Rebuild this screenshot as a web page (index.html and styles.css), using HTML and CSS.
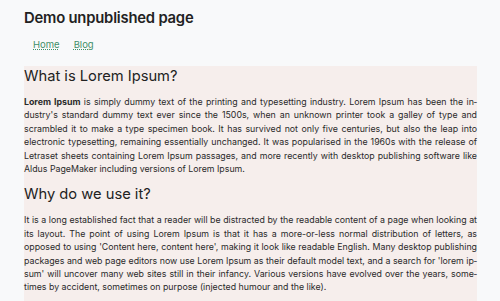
FILE: index.html
```html
<!doctype html>
<html lang="en">
<head>
	<title>Demo unpublished page</title>
	<link rel="stylesheet" href="styles.css">
</head>
<body>
	<div class="page">
		<h1>Demo unpublished page</h1>

		<ul class="nav">
			<li><a href="#">Home</a></li>
			<li><a href="#">Blog</a></li>
		</ul>

		<div class="content">
			<h2>What is Lorem Ipsum?</h2>
			<p><strong>Lorem Ipsum</strong> is simply dummy text of the printing and typesetting industry. Lorem Ipsum has been the in&shy;dustry's standard dummy text ever since the 1500s, when an unknown printer took a galley of type and scrambled it to make a type specimen book. It has survived not only five centuries, but also the leap into electronic typesetting, remaining essentially unchanged. It was popularised in the 1960s with the release of Letraset sheets containing Lorem Ipsum passages, and more recently with desktop publishing software like Aldus PageMaker including versions of Lorem Ipsum.</p>

			<h2>Why do we use it?</h2>
			<p>It is a long established fact that a reader will be distracted by the readable content of a page when looking at its layout. The point of using Lorem Ipsum is that it has a more-or-less normal distribution of letters, as opposed to using 'Content here, content here', making it look like readable English. Many desktop publishing packages and web page editors now use Lorem Ipsum as their default model text, and a search for 'lorem ip&shy;sum' will uncover many web sites still in their infancy. Various versions have evolved over the years, some&shy;times by accident, sometimes on purpose (injected humour and the like).</p>
		</div>
	</div>
</body>
</html>
```

FILE: styles.css
```css
body {
	margin: 0;
	background-color: #f8f9fa;
	font-family: Inter, "Liberation Sans", sans-serif;
	color: #222;
}

.page {
	width: 453px;
	padding: 9px 0 0 24px;
}

h1 {
	font-size: 14.8px;
	font-weight: 600;
	letter-spacing: -0.2px;
	line-height: 19px;
	margin: 0;
}

.nav {
	display: flex;
	gap: 14px;
	list-style: none;
	margin: 10px 0 0 0;
	padding: 0 0 0 9px;
	font-size: 9.5px;
	line-height: 13px;
}

.nav a {
	color: #3f8f68;
	text-decoration: underline;
	text-decoration-style: dotted;
}

.content {
	margin-top: 15px;
	background-color: #f6eeec;
	padding-bottom: 20px;
}

h2 {
	font-size: 14.7px;
	font-weight: 400;
	line-height: 20px;
	margin: 0;
}

p {
	font-size: 8.8px;
	line-height: 13.4px;
	text-align: justify;
	hyphens: manual;
	margin: 9px 0 9px 0;
	color: #2a2a2a;
}
```
